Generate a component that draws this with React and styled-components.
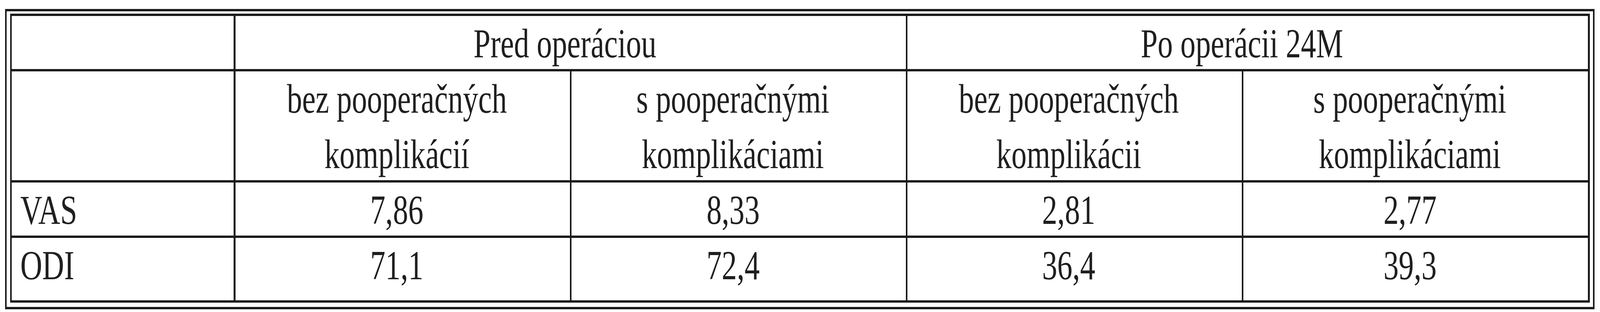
import React, { useState } from "react";
import styled, { createGlobalStyle } from "styled-components";

// Reference is 5588px wide; horizontal measures are expressed as a share of the viewport width.
const REF_W = 5588;
const h = (px) => `calc(${px} * 100vw / ${REF_W})`;
const INK = "#1b1b1b";

const Global = createGlobalStyle`
  html, body { margin: 0; padding: 0; background: #ffffff; overflow: hidden; }
  body { font-family: "Liberation Serif", "Times New Roman", serif; }
`;

const Frame = styled.div`
  width: fit-content;
  margin: 23px 0 0 ${h(18)};
  border-style: solid;
  border-color: ${INK};
  border-width: 6px ${h(6)};
  padding: 6px ${h(11)} 11px ${h(12)};
  background: #fff;
`;

const Grid = styled.div`
  display: grid;
  grid-template-columns: ${h(775)} ${h(1168)} ${h(1167)} ${h(1167)} ${h(1204)};
  grid-template-rows: 136px 279px 136px 160px;
  row-gap: 6px;
  column-gap: ${h(6)};
  padding: 6px ${h(6)};
  background: ${INK};
`;

const Cell = styled.div`
  background: #fff;
  color: #1f1f1f;
  font-family: "Liberation Serif", "Times New Roman", serif;
  font-size: 106px;
  line-height: 142px;
  padding: 0 ${h(69)} 0 ${h(29)};
  text-align: ${(p) => (p.$left ? "left" : "center")};
  grid-column: ${(p) => (p.$span ? `span ${p.$span}` : "auto")};
  white-space: nowrap;
  overflow: visible;
`;

const Label = styled.span`
  display: inline-block;
  transform: scaleX(var(--sx, 1));
  transform-origin: ${(p) => (p.$left ? "left center" : "center center")};
`;

const groups = ["Pred operáciou", "Po operácii 24M"];
const subs = [
  ["bez pooperačných", "komplikácií"],
  ["s pooperačnými", "komplikáciami"],
  ["bez pooperačných", "komplikácii"],
  ["s pooperačnými", "komplikáciami"],
];
const rows = [
  ["VAS", "7,86", "8,33", "2,81", "2,77"],
  ["ODI", "71,1", "72,4", "36,4", "39,3"],
];

export default function App() {
  const [sx] = useState(() =>
    typeof window !== "undefined" ? window.innerWidth / REF_W : 1
  );
  return (
    <>
      <Global />
      <Frame style={{ "--sx": sx }}>
        <Grid>
          <Cell $left />
          {groups.map((g) => (
            <Cell key={g} $span={2}>
              <Label>{g}</Label>
            </Cell>
          ))}
          <Cell $left />
          {subs.map((s, i) => (
            <Cell key={i}>
              <Label>
                {s[0]}
                <br />
                {s[1]}
              </Label>
            </Cell>
          ))}
          {rows.map((r) =>
            r.map((v, j) => (
              <Cell key={r[0] + j} $left={j === 0}>
                <Label $left={j === 0}>{v}</Label>
              </Cell>
            ))
          )}
        </Grid>
      </Frame>
    </>
  );
}
